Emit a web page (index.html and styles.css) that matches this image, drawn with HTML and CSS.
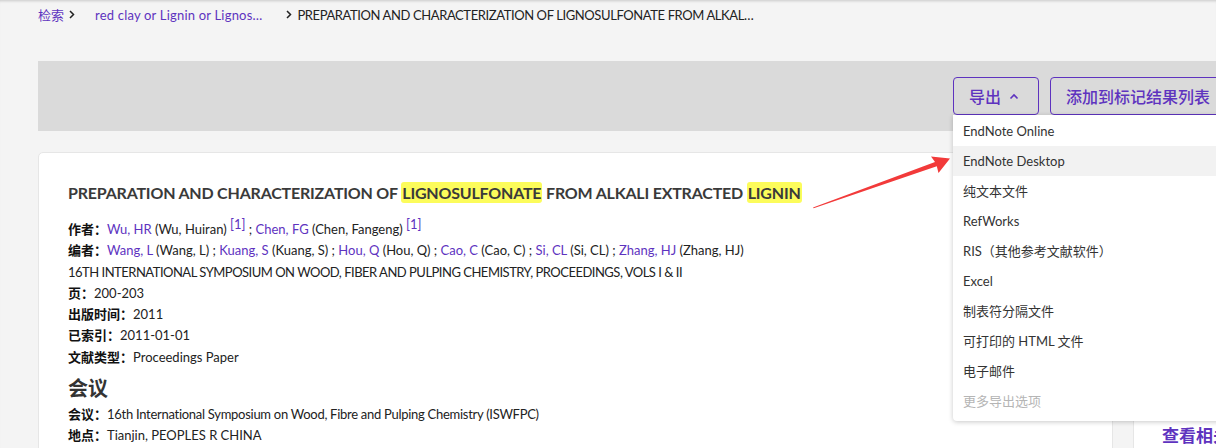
FILE: index.html
```html
<!DOCTYPE html>
<html lang="zh">
<head>
<meta charset="utf-8">
<title>PREPARATION AND CHARACTERIZATION OF LIGNOSULFONATE</title>
<link rel="stylesheet" href="styles.css">
</head>
<body>
<div class="page">
  <nav class="crumbs">
    <a class="crumb-link">检索</a>
    <svg class="chev" width="6" height="9" viewBox="0 0 6 9"><path d="M1 1l3.5 3.5L1 8" fill="none" stroke="#222" stroke-width="1.5"/></svg>
    <a class="crumb-link crumb-query">red clay or Lignin or Lignos…</a>
    <svg class="chev chev-2" width="6" height="9" viewBox="0 0 6 9"><path d="M1 1l3.5 3.5L1 8" fill="none" stroke="#222" stroke-width="1.5"/></svg>
    <span class="crumb-current">PREPARATION AND CHARACTERIZATION OF LIGNOSULFONATE FROM ALKAL…</span>
  </nav>

  <div class="toolbar">
    <div class="export-wrap">
      <button class="btn btn-export">导出
        <svg class="caret" width="10" height="7" viewBox="0 0 10 7"><path d="M1.5 5.5L5 2l3.5 3.5" fill="none" stroke="#5e33bf" stroke-width="1.6"/></svg>
      </button>
      <ul class="menu">
        <li>EndNote Online</li>
        <li class="hover">EndNote Desktop</li>
        <li>纯文本文件</li>
        <li>RefWorks</li>
        <li>RIS（其他参考文献软件）</li>
        <li>Excel</li>
        <li>制表符分隔文件</li>
        <li>可打印的 HTML 文件</li>
        <li>电子邮件</li>
        <li class="disabled">更多导出选项</li>
      </ul>
    </div>
    <button class="btn btn-add">添加到标记结果列表</button>
  </div>

  <div class="content">
    <main class="card">
      <h1 class="title">PREPARATION AND CHARACTERIZATION OF <mark>LIGNOSULFONATE</mark> FROM ALKALI EXTRACTED <mark>LIGNIN</mark></h1>
      <div class="meta">
        <p><b>作者：</b><a>Wu, HR</a> (Wu, Huiran) <sup>[1]</sup> ; <a>Chen, FG</a> (Chen, Fangeng) <sup>[1]</sup></p>
        <p><b>编者：</b><a>Wang, L</a> (Wang, L) ; <a>Kuang, S</a> (Kuang, S) ; <a>Hou, Q</a> (Hou, Q) ; <a>Cao, C</a> (Cao, C) ; <a>Si, CL</a> (Si, CL) ; <a>Zhang, HJ</a> (Zhang, HJ)</p>
        <p class="source">16TH INTERNATIONAL SYMPOSIUM ON WOOD, FIBER AND PULPING CHEMISTRY, PROCEEDINGS, VOLS I &amp; II</p>
        <p><b>页：</b>200-203</p>
        <p><b>出版时间：</b>2011</p>
        <p><b>已索引：</b>2011-01-01</p>
        <p><b>文献类型：</b>Proceedings Paper</p>
        <h2 class="section">会议</h2>
        <p class="conf"><b>会议：</b>16th International Symposium on Wood, Fibre and Pulping Chemistry (ISWFPC)</p>
        <p><b>地点：</b>Tianjin, PEOPLES R CHINA</p>
      </div>
    </main>
    <aside class="side">
      <h3 class="side-title">查看相关记录</h3>
    </aside>
  </div>

  <svg class="arrow" width="1216" height="448" viewBox="0 0 1216 448">
    <polygon points="813,207.5 935,162 931,156.5 950,158.5 938.5,173 936.8,166.3 813.6,208.2" fill="#f23a3a"/>
  </svg>
</div>
</body>
</html>
```

FILE: styles.css
```css
* { box-sizing: border-box; }
html, body { margin: 0; padding: 0; }
body {
  background: #f4f4f4;
  font-family: "Lato", "Noto Sans CJK SC", sans-serif;
  color: #222;
  overflow: hidden;
  width: 1216px;
  height: 448px;
}
.page {
  position: relative;
  width: 1216px;
  height: 448px;
  box-shadow: inset 0 3px 3px -2px rgba(0,0,0,0.18);
}
.crumbs {
  display: flex;
  align-items: center;
  height: 29px;
  padding: 0 0 0 38px;
  font-size: 13px;
}
.crumb-link { color: #5e33bf; }
.chev { margin: 0 9px 0 5px; flex-shrink: 0; }
.crumb-query { margin-left: 11px; letter-spacing: 0.2px; }
.chev-2 { margin: 0 5px 0 24px; }
.crumb-current { color: #222; letter-spacing: -0.4px; }

.toolbar {
  margin: 32px 0 0 38px;
  height: 70px;
  background: #dadada;
  display: flex;
  justify-content: flex-end;
  align-items: center;
  gap: 11px;
}
.btn {
  height: 38px;
  border: 1px solid #5e33bf;
  border-radius: 4px;
  background: transparent;
  color: #5e33bf;
  font-family: "Lato", "Noto Sans CJK SC", sans-serif;
  font-size: 16px;
  font-weight: 500;
  padding: 0 15px;
  display: flex;
  align-items: center;
  flex-shrink: 0;
}
.export-wrap { position: relative; }
.btn-export { width: 86px; gap: 8px; }
.caret { margin-top: 1px; }
.btn-add { width: 176px; margin-right: -10px; }

.menu {
  position: absolute;
  top: 38px;
  left: 0;
  width: 290px;
  margin: 0;
  padding: 1px 0 5px;
  list-style: none;
  background: #fff;
  border-radius: 0 0 4px 4px;
  box-shadow: 0 1px 5px rgba(0,0,0,0.22);
  z-index: 5;
}
.menu li {
  height: 30px;
  line-height: 30px;
  padding-left: 10px;
  font-size: 13px;
  color: #333;
}
.menu li.hover { background: #f2f2f2; }
.menu li.disabled { color: #b5b5b5; }

.content {
  display: flex;
  gap: 20px;
  margin: 21px 0 0 38px;
}
.card {
  width: 1075px;
  flex-shrink: 0;
  height: 330px;
  background: #fff;
  border: 1px solid #e6e6e6;
  border-radius: 5px;
  padding: 28px 29px;
}
.title {
  margin: 0;
  font-size: 16px;
  line-height: 24px;
  font-weight: 700;
  color: #3a3a3a;
  letter-spacing: -0.2px;
}
mark {
  background: #fcfc5b;
  color: inherit;
  border-radius: 3px;
  padding: 1px 1px;
}
.meta { margin-top: 13px; font-size: 13px; color: #222; }
.meta p { margin: 0; line-height: 21.3px; white-space: nowrap; }
.meta b { font-weight: 700; color: #111; letter-spacing: 0; }
.meta a { color: #5e33bf; }
.meta .source { letter-spacing: -0.5px; }
.meta .conf { letter-spacing: -0.28px; }
.meta sup {
  color: #5e33bf;
  font-size: 13px;
  vertical-align: 5px;
  line-height: 1;
}
.section {
  margin: 6px 0 2px;
  font-size: 20px;
  line-height: 28px;
  font-weight: 700;
  color: #333;
}
.side {
  width: 300px;
  flex-shrink: 0;
  height: 330px;
  background: #fff;
  border: 1px solid #e6e6e6;
  border-radius: 5px;
  padding: 271px 0 0 28px;
}
.side-title {
  margin: 0;
  font-size: 17px;
  font-weight: 700;
  color: #5e33bf;
  line-height: 24px;
  white-space: nowrap;
}
.arrow {
  position: absolute;
  left: 0;
  top: 0;
  pointer-events: none;
  z-index: 10;
}
```
